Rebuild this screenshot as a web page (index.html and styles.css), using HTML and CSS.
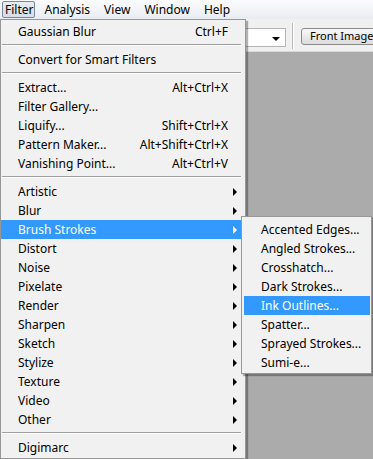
FILE: index.html
```html
<!DOCTYPE html>
<html lang="en">
<head>
    <meta charset="UTF-8">
    <title>Filter menu</title>
    <link rel="stylesheet" href="styles.css">
</head>
<body>
    <div class="menubar">
        <span class="menubar-item active">Filter</span>
        <span class="menubar-item">Analysis</span>
        <span class="menubar-item">View</span>
        <span class="menubar-item">Window</span>
        <span class="menubar-item">Help</span>
    </div>

    <div class="workspace">
        <div class="toolbar">
            <div class="select"><span class="select-arrow"></span></div>
            <div class="divider"></div>
            <button class="tool-button">Front Image</button>
        </div>
        <div class="canvas"></div>
    </div>

    <!-- Filter menu -->
    <div class="menu">
        <div class="item"><span>Gaussian Blur</span><span class="key">Ctrl+F</span></div>
        <div class="sep"></div>
        <div class="item"><span>Convert for Smart Filters</span></div>
        <div class="sep"></div>
        <div class="item"><span>Extract...</span><span class="key">Alt+Ctrl+X</span></div>
        <div class="item"><span>Filter Gallery...</span></div>
        <div class="item"><span>Liquify...</span><span class="key">Shift+Ctrl+X</span></div>
        <div class="item"><span>Pattern Maker...</span><span class="key">Alt+Shift+Ctrl+X</span></div>
        <div class="item"><span>Vanishing Point...</span><span class="key">Alt+Ctrl+V</span></div>
        <div class="sep"></div>
        <div class="item sub"><span>Artistic</span></div>
        <div class="item sub"><span>Blur</span></div>
        <div class="item sub selected"><span>Brush Strokes</span></div>
        <div class="item sub"><span>Distort</span></div>
        <div class="item sub"><span>Noise</span></div>
        <div class="item sub"><span>Pixelate</span></div>
        <div class="item sub"><span>Render</span></div>
        <div class="item sub"><span>Sharpen</span></div>
        <div class="item sub"><span>Sketch</span></div>
        <div class="item sub"><span>Stylize</span></div>
        <div class="item sub"><span>Texture</span></div>
        <div class="item sub"><span>Video</span></div>
        <div class="item sub"><span>Other</span></div>
        <div class="sep"></div>
        <div class="item sub"><span>Digimarc</span></div>
    </div>

    <!-- Brush Strokes submenu -->
    <div class="menu submenu">
        <div class="item"><span>Accented Edges...</span></div>
        <div class="item"><span>Angled Strokes...</span></div>
        <div class="item"><span>Crosshatch...</span></div>
        <div class="item"><span>Dark Strokes...</span></div>
        <div class="item selected"><span>Ink Outlines...</span></div>
        <div class="item"><span>Spatter...</span></div>
        <div class="item"><span>Sprayed Strokes...</span></div>
        <div class="item"><span>Sumi-e...</span></div>
    </div>
</body>
</html>
```

FILE: styles.css
```css
body {
    margin: 0;
    width: 373px;
    height: 459px;
    overflow: hidden;
    font-family: 'Noto Sans', 'Noto Sans CJK KR', sans-serif;
    font-size: 12px;
    color: #000;
    background: #f0f0f0;
    display: flex;
    flex-direction: column;
}

/* menu bar */
.menubar {
    height: 19px;
    display: flex;
    align-items: center;
    background: linear-gradient(#fbfcfd, #e8ecf1);
    box-sizing: border-box;
}

.menubar-item {
    padding: 0 6px;
    line-height: 15px;
    border: 1px solid transparent;
    border-radius: 2px;
}

.menubar-item.active {
    margin-left: 2px;
    margin-right: 2px;
    padding: 0 1px 0 2px;
    background: linear-gradient(#e8edf3, #d6dde6);
    border-color: #7b8a9b;
}

/* workspace behind the menu */
.workspace {
    flex: 1;
    display: flex;
    flex-direction: column;
}

.toolbar {
    height: 33px;
    display: flex;
    align-items: center;
    padding-left: 190px;
    overflow: hidden;
    background: #f0f0f0;
    border-bottom: 1px solid #d8d8d8;
    box-sizing: border-box;
}

.toolbar > * {
    flex-shrink: 0;
}

.select {
    width: 96px;
    height: 19px;
    background: #fff;
    border: 1px solid #b5b5b5;
    position: relative;
    box-sizing: border-box;
    margin-top: 4px;
}

.select-arrow {
    position: absolute;
    right: 5px;
    top: 8px;
    border-left: 4px solid transparent;
    border-right: 4px solid transparent;
    border-top: 4px solid #000;
}

.divider {
    width: 1px;
    height: 26px;
    margin: 2px 8px 0 6px;
    background: #b9b9b9;
    box-shadow: 1px 0 0 #fff;
}

.tool-button {
    height: 17px;
    padding: 0 8px;
    margin-top: 2px;
    font-family: inherit;
    font-size: 11px;
    border: 1px solid #8c8c8c;
    border-radius: 3px;
    background: linear-gradient(#f8f8f8, #dcdcdc);
    white-space: nowrap;
    line-height: 14px;
}

.canvas {
    flex: 1;
    background: #ababab;
}

/* menus */
.menu {
    position: absolute;
    top: 19px;
    left: 0;
    width: 246px;
    height: 440px;
    box-sizing: border-box;
    padding: 2px 0;
    background: #f1f1f1;
    border: 1px solid #979797;
    box-shadow: 2px 2px 1px rgba(0, 0, 0, 0.3);
}

.item {
    height: 19px;
    display: flex;
    align-items: center;
    justify-content: space-between;
    padding: 0 13px 0 17px;
    margin: 0 4px 0 0;
    white-space: nowrap;
    position: relative;
}

.item.sub::after {
    content: '';
    position: absolute;
    right: 4px;
    top: 6px;
    border-top: 4px solid transparent;
    border-bottom: 4px solid transparent;
    border-left: 4px solid #000;
}

.item.selected {
    background: #3399ff;
    color: #fff;
}

.item.sub.selected::after {
    border-left-color: #fff;
}

.sep {
    height: 1px;
    margin: 3px 4px 5px 1px;
    background: #a0a0a0;
    box-shadow: 0 1px 0 #fff;
}

.submenu {
    top: 216px;
    left: 241px;
    width: 131px;
    height: 158px;
    padding: 3px 0 2px;
}

.submenu .item {
    padding-left: 17px;
    margin: 0 1px 0 2px;
}
```
